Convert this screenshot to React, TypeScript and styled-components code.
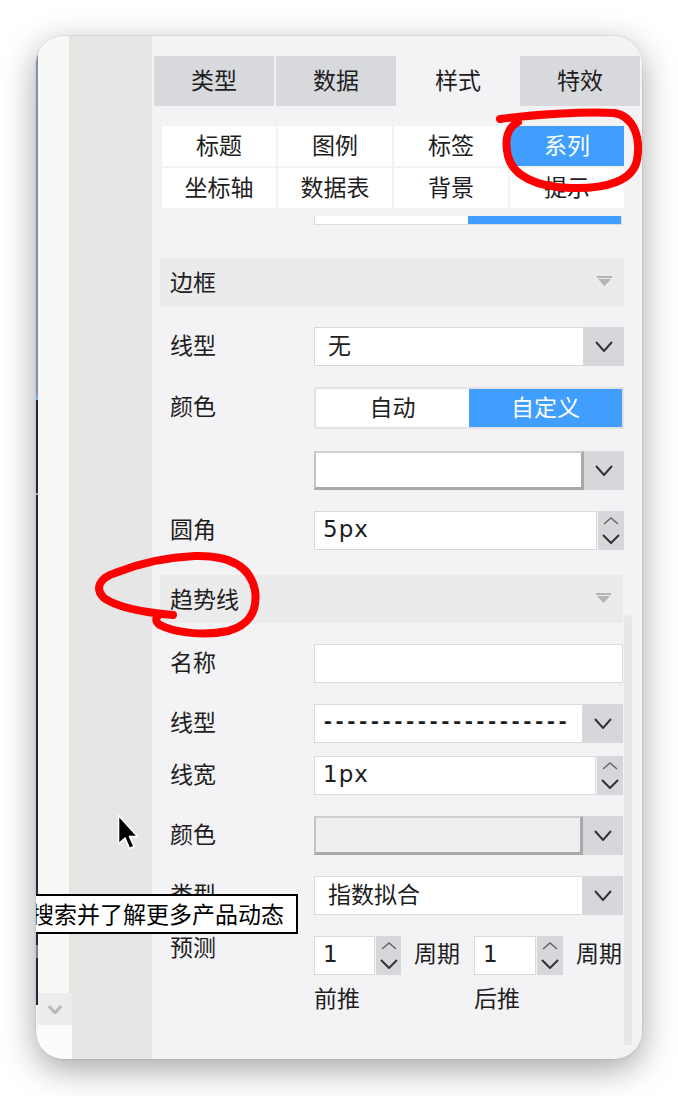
import React from "react";
import styled, { createGlobalStyle } from "styled-components";

const GlobalStyle = createGlobalStyle`
  html, body {
    margin: 0;
    padding: 0;
    background: #ffffff;
  }
  body {
    font-family: "Noto Sans CJK SC", "Noto Sans", sans-serif;
  }
  * {
    box-sizing: border-box;
  }
`;

// page + window frame
const Page = styled.div`
  position: relative;
  width: 678px;
  height: 1096px;
  padding: 36px;
`;

const Window = styled.div`
  position: relative;
  display: flex;
  width: 606px;
  height: 1023px;
  border-radius: 28px;
  overflow: hidden;
  background: #f3f3f5;
  box-shadow: 0 10px 34px rgba(0, 0, 0, 0.36), 0 0 0 1px rgba(0, 0, 0, 0.05);
`;

// left background app strips
const EdgeStrip = styled.div`
  width: 2px;
  display: flex;
  flex-direction: column;
  background: #f2f2f2;
`;

const EdgeSegment = styled.div<{ $h: number; $c: string }>`
  flex-shrink: 0;
  height: ${(p) => p.$h}px;
  background: ${(p) => p.$c};
`;

const Sidebar = styled.div`
  width: 34px;
  display: flex;
  flex-direction: column;
  background: #e6e6e6;
`;

const SidebarBody = styled.div`
  flex: 1;
  margin-right: 1px;
  background: #f8f8f6;
  border-right: 2px solid #e9e4d6;
`;

const ScrollCap = styled.div`
  height: 32px;
  display: flex;
  align-items: center;
  justify-content: center;
  background: #ececec;
`;

const SidebarFoot = styled.div`
  height: 34px;
  background: #fcfcfc;
`;

const GrayColumn = styled.div`
  width: 80px;
  background: #e6e6e6;
`;

// settings panel
const Panel = styled.div`
  position: relative;
  flex: 1;
  display: flex;
  flex-direction: column;
  padding-top: 20px;
  background: #f3f3f5;
  color: #1e1e1e;
  font-size: 23px;
  line-height: 30px;
`;

const TabBar = styled.div`
  display: flex;
  gap: 2px;
  padding-left: 2px;
`;

const Tab = styled.div<{ $active?: boolean }>`
  width: 120px;
  height: 50px;
  display: flex;
  align-items: center;
  justify-content: center;
  padding-bottom: 4px;
  background: ${(p) => (p.$active ? "#f3f3f5" : "#d8d9dc")};
`;

const SubTabs = styled.div`
  width: 462px;
  margin: 20px 0 0 10px;
  display: grid;
  grid-template-columns: repeat(4, 1fr);
  gap: 2px;
`;

const SubTab = styled.div<{ $active?: boolean }>`
  height: 40px;
  display: flex;
  align-items: center;
  justify-content: center;
  padding-bottom: 4px;
  background: ${(p) => (p.$active ? "#409eff" : "#ffffff")};
  color: ${(p) => (p.$active ? "#ffffff" : "#1e1e1e")};
`;

const SegmentStub = styled.div`
  width: 308px;
  height: 9px;
  margin: 8px 0 0 162px;
  display: flex;
  border: 1px solid #dcdcdc;
  border-top: none;
  background: #ffffff;
`;

const StubHalf = styled.div<{ $on?: boolean }>`
  flex: 1;
  background: ${(p) => (p.$on ? "#409eff" : "#ffffff")};
`;

const Section = styled.section<{ $top: number; $width: number }>`
  width: ${(p) => p.$width}px;
  margin: ${(p) => p.$top}px 0 0 8px;
  display: flex;
  flex-direction: column;
`;

const SectionHeader = styled.div`
  height: 48px;
  display: flex;
  align-items: center;
  justify-content: space-between;
  padding: 0 12px 3px 10px;
  background: #ebebec;
`;

const Row = styled.div<{ $top: number; $start?: boolean }>`
  display: flex;
  align-items: ${(p) => (p.$start ? "flex-start" : "center")};
  margin-top: ${(p) => p.$top}px;
`;

const Label = styled.div<{ $top?: boolean }>`
  flex-shrink: 0;
  width: 154px;
  padding-left: 10px;
  padding-bottom: ${(p) => (p.$top ? "0" : "6px")};
  margin-top: ${(p) => (p.$top ? "-5px" : "0")};
`;

const Control = styled.div`
  flex: 1;
  min-width: 0;
  display: flex;
`;

const SelectValue = styled.div<{ $mono?: boolean }>`
  flex: 1;
  height: 39px;
  display: flex;
  align-items: center;
  padding-left: ${(p) => (p.$mono ? "7px" : "13px")};
  padding-bottom: ${(p) => (p.$mono ? "3px" : "6px")};
  background: #ffffff;
  border: 1px solid #d9d9d9;
  white-space: nowrap;
  overflow: hidden;
  font-family: ${(p) =>
    p.$mono ? '"DejaVu Sans Mono", monospace' : "inherit"};
  font-size: ${(p) => (p.$mono ? "19.5px" : "23px")};
  font-weight: ${(p) => (p.$mono ? 700 : 400)};
`;

const ColorValue = styled.div<{ $fill: string }>`
  flex: 1;
  height: 39px;
  background: ${(p) => p.$fill};
  border-style: solid;
  border-width: 2px 3px 3px 2px;
  border-color: #cfcfcf #a9a9a9 #a9a9a9 #c4c4c4;
`;

const DropButton = styled.div`
  width: 40px;
  height: 39px;
  display: flex;
  align-items: center;
  justify-content: center;
  background: #d6d7da;
`;

const NumberValue = styled.div<{ $width?: number }>`
  ${(p) => (p.$width ? `width: ${p.$width}px;` : "flex: 1;")}
  height: 39px;
  display: flex;
  align-items: center;
  padding: 0 0 4px 8px;
  background: #ffffff;
  border: 1px solid #d9d9d9;
  font-family: "DejaVu Sans", sans-serif;
  font-size: 23px;
  letter-spacing: 1px;
`;

const Spinner = styled.div<{ $width: number }>`
  width: ${(p) => p.$width}px;
  height: 39px;
  margin-left: 1px;
  display: flex;
  flex-direction: column;
  align-items: center;
  justify-content: center;
  gap: 9px;
  background: #d6d7da;
`;

const Segmented = styled.div`
  flex: 1;
  height: 42px;
  display: flex;
  border: 2px solid #e2e2e2;
`;

const SegOption = styled.div<{ $on?: boolean }>`
  flex: 1;
  display: flex;
  align-items: center;
  justify-content: center;
  padding-bottom: 4px;
  background: ${(p) => (p.$on ? "#409eff" : "#ffffff")};
  color: ${(p) => (p.$on ? "#ffffff" : "#1e1e1e")};
`;

const ForecastGroup = styled.div<{ $width?: number }>`
  ${(p) => (p.$width ? `width: ${p.$width}px;` : "flex: 1;")}
  display: flex;
  flex-direction: column;
`;

const ForecastLine = styled.div`
  display: flex;
  align-items: center;
`;

const Unit = styled.span`
  margin-left: 13px;
  padding-bottom: 8px;
  white-space: nowrap;
`;

const Caption = styled.div`
  margin-top: 7px;
  line-height: 30px;
`;

const ScrollTrack = styled.div`
  position: absolute;
  top: 579px;
  right: 10px;
  bottom: 14px;
  width: 8px;
  border-radius: 4px 4px 0 0;
  background: #e7e7e8;
`;

// overlays
const Tooltip = styled.div`
  position: absolute;
  left: -13px;
  top: 858px;
  height: 40px;
  display: flex;
  align-items: center;
  padding: 0 12px 3px 6px;
  background: #ffffff;
  border: 2px solid #000000;
  color: #000000;
  font-size: 23px;
  white-space: nowrap;
`;

const Cursor = styled.svg`
  position: absolute;
  left: 81px;
  top: 778px;
`;

const Annotations = styled.svg`
  position: absolute;
  left: 0;
  top: 0;
  pointer-events: none;
`;

const Chevron = ({
  up,
  w,
  h,
  color,
  sw,
}: {
  up?: boolean;
  w: number;
  h: number;
  color: string;
  sw: number;
}) => (
  <svg width={w} height={h} viewBox={`0 0 ${w} ${h}`}>
    <polyline
      points={
        up
          ? `1,${h - 1} ${w / 2},1 ${w - 1},${h - 1}`
          : `1,1 ${w / 2},${h - 1} ${w - 1},1`
      }
      fill="none"
      stroke={color}
      strokeWidth={sw}
    />
  </svg>
);

const Caret = () => (
  <svg width="15" height="10" viewBox="0 0 15 10">
    <rect x="0" y="0" width="15" height="2" fill="#b4b4b4" />
    <polygon points="1,3 14,3 7.5,10" fill="#b4b4b4" />
  </svg>
);

const Select = ({ value, mono }: { value: string; mono?: boolean }) => (
  <Control>
    <SelectValue $mono={mono}>{value}</SelectValue>
    <DropButton>
      <Chevron w={18} h={11} color="#333" sw={2} />
    </DropButton>
  </Control>
);

const ColorSelect = ({ fill }: { fill: string }) => (
  <Control>
    <ColorValue $fill={fill} />
    <DropButton>
      <Chevron w={18} h={11} color="#333" sw={2} />
    </DropButton>
  </Control>
);

const SpinBox = ({ width }: { width: number }) => (
  <Spinner $width={width}>
    <Chevron up w={16} h={8} color="#666" sw={1.5} />
    <Chevron w={18} h={10} color="#333" sw={2} />
  </Spinner>
);

const edgeSegments = [
  { h: 359, c: "#8391ab" },
  { h: 5, c: "#7aaef2" },
  { h: 93, c: "#25253f" },
  { h: 2, c: "#a0a0aa" },
  { h: 450, c: "#25253f" },
  { h: 13, c: "#7a7f95" },
  { h: 47, c: "#25253f" },
];

const mainTabs = ["类型", "数据", "样式", "特效"];
const subTabs = ["标题", "图例", "标签", "系列", "坐标轴", "数据表", "背景", "提示"];

const App = () => {
  return (
    <Page>
      <GlobalStyle />
      <Window>
        <EdgeStrip>
          {edgeSegments.map((s, i) => (
            <EdgeSegment key={i} $h={s.h} $c={s.c} />
          ))}
        </EdgeStrip>
        <Sidebar>
          <SidebarBody />
          <ScrollCap>
            <Chevron w={14} h={9} color="#b9b9b9" sw={3} />
          </ScrollCap>
          <SidebarFoot />
        </Sidebar>
        <GrayColumn />

        <Panel>
          <TabBar>
            {mainTabs.map((t) => (
              <Tab key={t} $active={t === "样式"}>
                {t}
              </Tab>
            ))}
          </TabBar>

          <SubTabs>
            {subTabs.map((t) => (
              <SubTab key={t} $active={t === "系列"}>
                {t}
              </SubTab>
            ))}
          </SubTabs>

          <SegmentStub>
            <StubHalf />
            <StubHalf $on />
          </SegmentStub>

          {/* 边框 */}
          <Section $top={33} $width={464}>
            <SectionHeader>
              <span>边框</span>
              <Caret />
            </SectionHeader>
            <Row $top={21}>
              <Label>线型</Label>
              <Select value="无" />
            </Row>
            <Row $top={21}>
              <Label>颜色</Label>
              <Segmented>
                <SegOption>自动</SegOption>
                <SegOption $on>自定义</SegOption>
              </Segmented>
            </Row>
            <Row $top={22}>
              <Label />
              <ColorSelect fill="#ffffff" />
            </Row>
            <Row $top={21}>
              <Label>圆角</Label>
              <Control>
                <NumberValue>5px</NumberValue>
                <SpinBox width={26} />
              </Control>
            </Row>
          </Section>

          {/* 趋势线 */}
          <Section $top={25} $width={463}>
            <SectionHeader>
              <span>趋势线</span>
              <Caret />
            </SectionHeader>
            <Row $top={21}>
              <Label>名称</Label>
              <Control>
                <NumberValue />
              </Control>
            </Row>
            <Row $top={21}>
              <Label>线型</Label>
              <Select value="---------------------" mono />
            </Row>
            <Row $top={13}>
              <Label>线宽</Label>
              <Control>
                <NumberValue>1px</NumberValue>
                <SpinBox width={26} />
              </Control>
            </Row>
            <Row $top={21}>
              <Label>颜色</Label>
              <ColorSelect fill="#efeff0" />
            </Row>
            <Row $top={21}>
              <Label>类型</Label>
              <Select value="指数拟合" />
            </Row>
            <Row $top={21} $start>
              <Label $top>预测</Label>
              <Control>
                <ForecastGroup $width={160}>
                  <ForecastLine>
                    <NumberValue $width={61}>1</NumberValue>
                    <SpinBox width={25} />
                    <Unit>周期</Unit>
                  </ForecastLine>
                  <Caption>前推</Caption>
                </ForecastGroup>
                <ForecastGroup>
                  <ForecastLine>
                    <NumberValue $width={62}>1</NumberValue>
                    <SpinBox width={26} />
                    <Unit>周期</Unit>
                  </ForecastLine>
                  <Caption>后推</Caption>
                </ForecastGroup>
              </Control>
            </Row>
          </Section>

          <ScrollTrack />
        </Panel>

        <Tooltip>搜索并了解更多产品动态</Tooltip>

        <Cursor width="22" height="38" viewBox="0 0 22 38">
          <path
            d="M1.5,1.5 L1.5,30 L8,24 L12.5,34.5 L17,32.5 L12.5,22.5 L20.5,22.5 Z"
            fill="#000000"
            stroke="#ffffff"
            strokeWidth="1.6"
            strokeLinejoin="round"
          />
        </Cursor>
      </Window>

      <Annotations width="678" height="1096" viewBox="0 0 678 1096">
        <path
          d="M500,119 C530,115 585,111 614,113 C634,116 641,138 637,160 C633,181 606,189 571,188 C536,187 513,176 508,156 C504,139 508,127 518,122"
          fill="none"
          stroke="#ff0000"
          strokeWidth="8"
          strokeLinecap="round"
          strokeLinejoin="round"
        />
        <path
          d="M173,615 C150,613 118,608 104,598 C94,588 100,578 115,573 C140,563 170,557 195,556 C230,555 250,566 255,590 C258,612 248,626 228,631 C205,636 175,633 160,625 C155,622 155,617 160,614"
          fill="none"
          stroke="#ff0000"
          strokeWidth="8"
          strokeLinecap="round"
          strokeLinejoin="round"
        />
      </Annotations>
    </Page>
  );
};

export default App;
